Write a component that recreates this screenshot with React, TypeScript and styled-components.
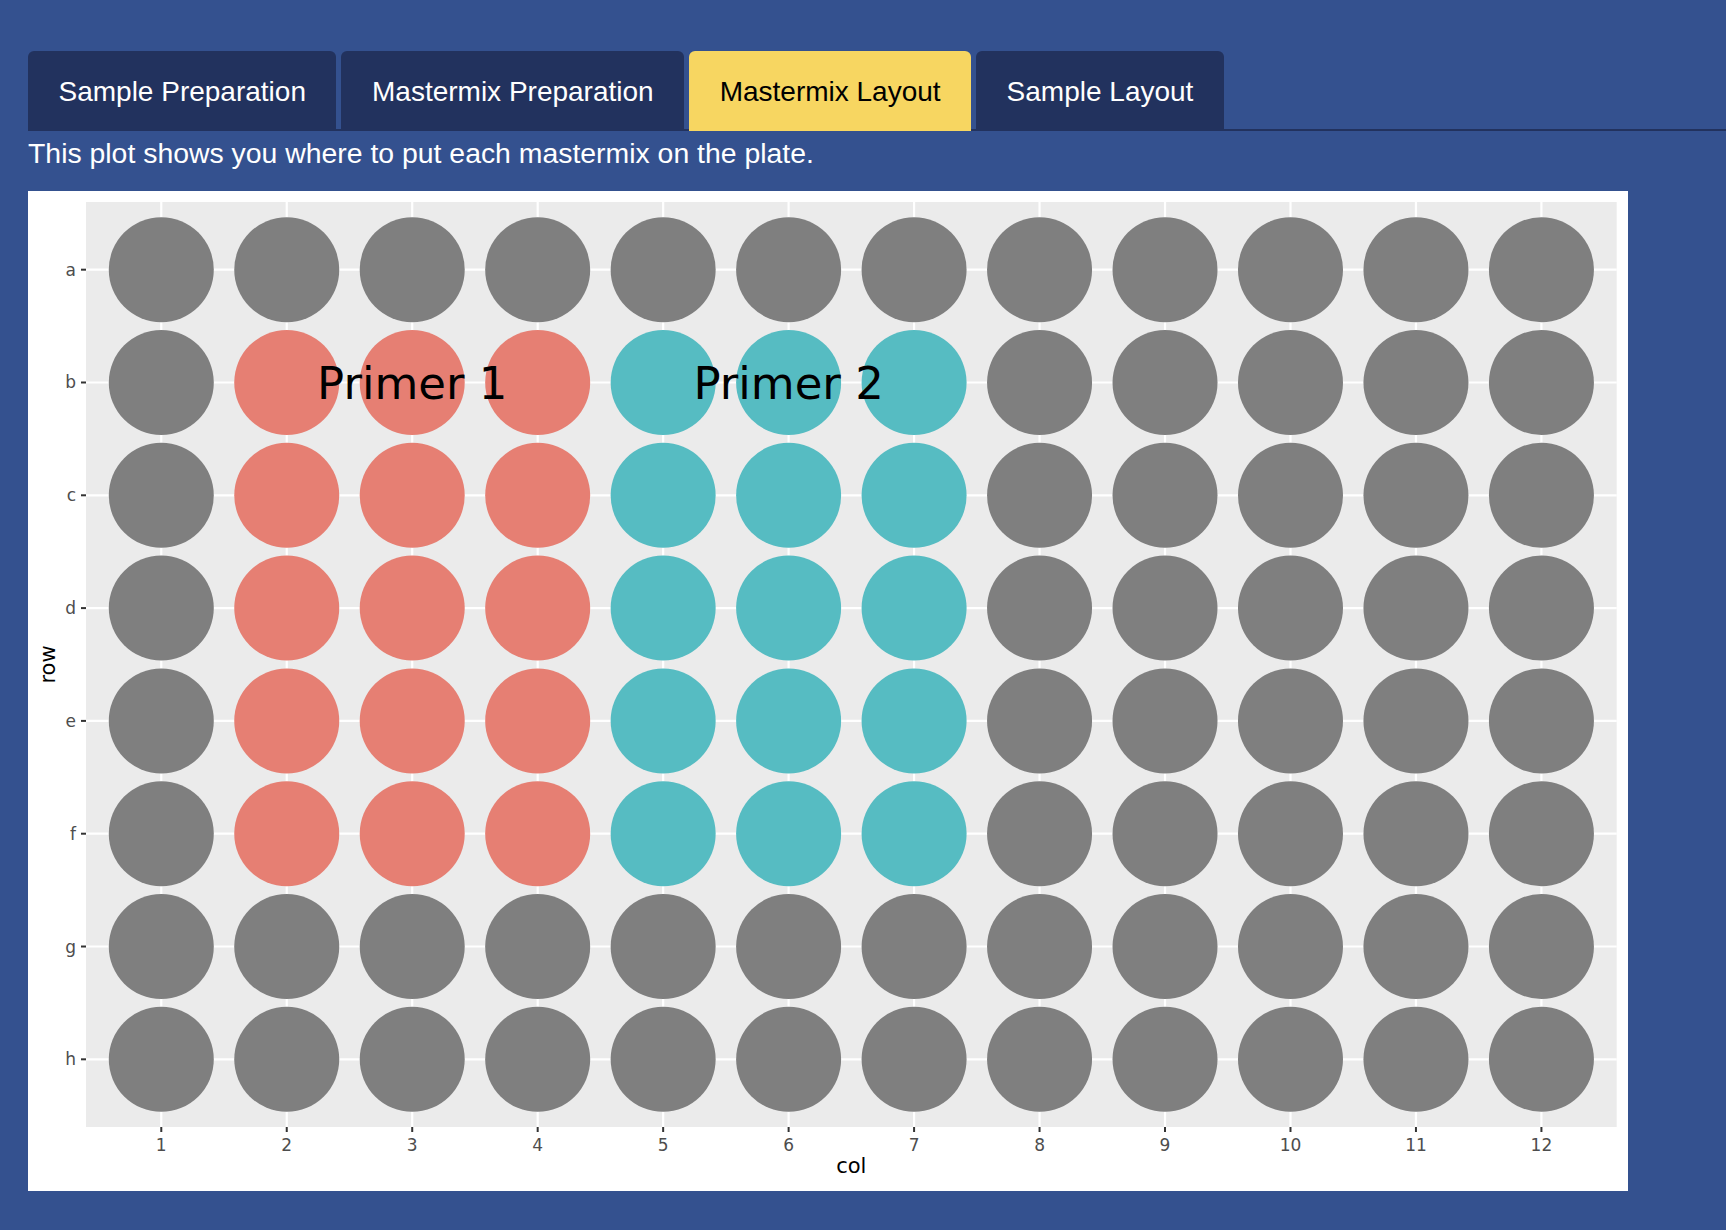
import * as React from 'react';
import styled, { createGlobalStyle } from 'styled-components';

const GlobalStyle = createGlobalStyle`
    html, body {
        margin: 0;
        padding: 0;
        background: #34518f;
    }
    body {
        font-family: "Liberation Sans", Arial, sans-serif;
    }
`;

const Page = styled.div`
    min-height: 1230px;
    box-sizing: border-box;
    padding: 51px 0 40px 28px;
`;

const TabBar = styled.nav`
    display: flex;
    gap: 5px;
    height: 78px;
    border-bottom: 2px solid #22325e;
`;

const Tab = styled.div<{ active?: boolean }>`
    display: flex;
    align-items: center;
    box-sizing: border-box;
    height: ${({ active }) => active ? '80px' : '78px'};
    padding: ${({ active }) => active ? '3px 30.5px 2px' : '3px 30.5px 0'};
    border-radius: 6px 6px 0 0;
    background: ${({ active }) => active ? '#f7d661' : '#22325e'};
    color: ${({ active }) => active ? '#000' : '#fff'};
    font-size: 28px;
    white-space: nowrap;
    cursor: pointer;
`;

const Description = styled.p`
    margin: 6px 0 22px;
    color: #fff;
    font-size: 28.4px;
    line-height: 32px;
`;

const PlotCard = styled.div`
    width: 1600px;
    height: 1000px;
    background: #fff;
`;

const PlotSvg = styled.svg`
    display: block;
    font-family: "DejaVu Sans", sans-serif;
`;

const tabs = ['Sample Preparation', 'Mastermix Preparation', 'Mastermix Layout', 'Sample Layout'];

const ROWS = ['a', 'b', 'c', 'd', 'e', 'f', 'g', 'h'];
const COLS = [1, 2, 3, 4, 5, 6, 7, 8, 9, 10, 11, 12];

// panel geometry (ggplot discrete scales, 0.6 expansion)
const PX = 58;
const PY = 11;
const PW = 1530.7;
const PH = 925;
const xUnit = PW / 12.2;
const yUnit = PH / 8.2;
const cx = (c: number) => PX + (c - 0.4) * xUnit;
const cy = (r: number) => PY + (r + 0.6) * yUnit;

const wellColor = (r: number, c: number) => {
    if (r >= 1 && r <= 5) {
        if (c >= 2 && c <= 4) return '#e67f73';
        if (c >= 5 && c <= 7) return '#56bcc2';
    }
    return '#7f7f7f';
};

const PlateLayout: React.FC = () => (
    <PlotSvg width={1600} height={1000} viewBox="0 0 1600 1000">
        <rect x={PX} y={PY} width={PW} height={PH} fill="#ebebeb" />
        {COLS.map(c => (
            <line key={'gx' + c} x1={cx(c)} x2={cx(c)} y1={PY} y2={PY + PH} stroke="#fff" strokeWidth={2.2} />
        ))}
        {ROWS.map((_, r) => (
            <line key={'gy' + r} x1={PX} x2={PX + PW} y1={cy(r)} y2={cy(r)} stroke="#fff" strokeWidth={2.2} />
        ))}
        {ROWS.map((_, r) => COLS.map(c => (
            <circle key={r + '-' + c} cx={cx(c)} cy={cy(r)} r={52.5} fill={wellColor(r, c)} />
        )))}
        <text x={cx(3)} y={cy(1) + 16.4} fontSize={45} textAnchor="middle" fill="#000">Primer 1</text>
        <text x={cx(6)} y={cy(1) + 16.4} fontSize={45} textAnchor="middle" fill="#000">Primer 2</text>

        {ROWS.map((label, r) => (
            <g key={'ya' + r}>
                <line x1={PX - 5} x2={PX} y1={cy(r)} y2={cy(r)} stroke="#333" strokeWidth={2} />
                <text x={PX - 10} y={cy(r) + 6} fontSize={17} textAnchor="end" fill="#4d4d4d">{label}</text>
            </g>
        ))}
        {COLS.map(c => (
            <g key={'xa' + c}>
                <line x1={cx(c)} x2={cx(c)} y1={PY + PH} y2={PY + PH + 5} stroke="#333" strokeWidth={2} />
                <text x={cx(c)} y={960} fontSize={17} textAnchor="middle" fill="#4d4d4d">{c}</text>
            </g>
        ))}
        <text x={PX + PW / 2} y={982} fontSize={21} textAnchor="middle" fill="#000">col</text>
        <text transform={`translate(27 ${PY + PH / 2}) rotate(-90)`} fontSize={21} textAnchor="middle" fill="#000">row</text>
    </PlotSvg>
);

export default function App() {
    const [active, setActive] = React.useState<number>(2);

    return (
        <Page>
            <GlobalStyle />
            <TabBar>
                {tabs.map((t, i) => (
                    <Tab key={t} active={i === active} onClick={() => setActive(i)}>{t}</Tab>
                ))}
            </TabBar>
            <Description>This plot shows you where to put each mastermix on the plate.</Description>
            <PlotCard>
                <PlateLayout />
            </PlotCard>
        </Page>
    );
}
